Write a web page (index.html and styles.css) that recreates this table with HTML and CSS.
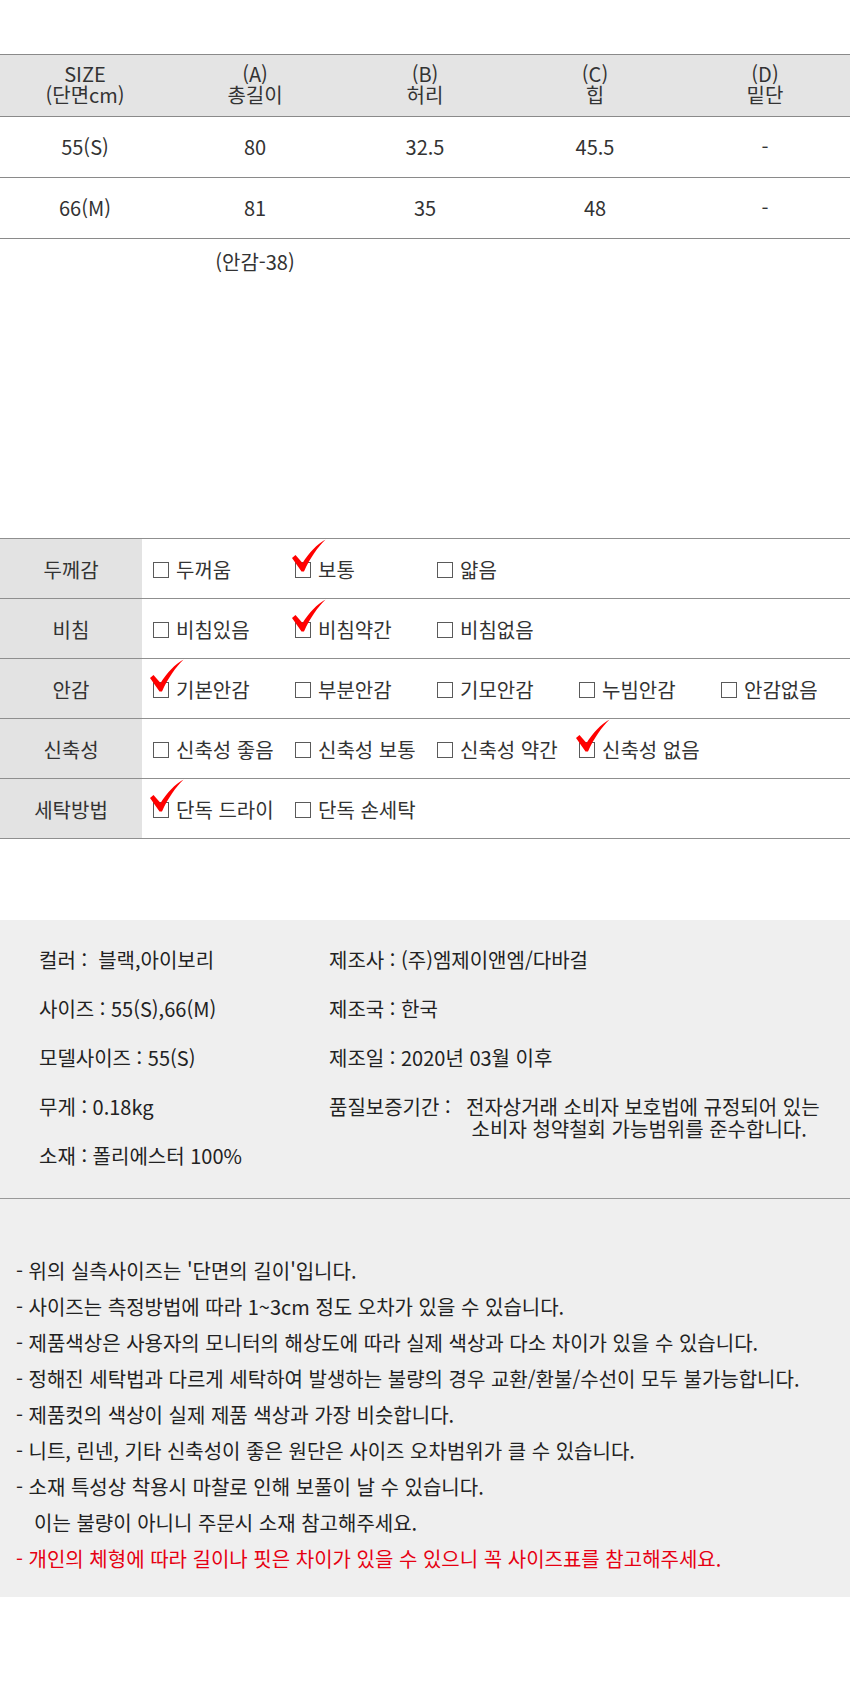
FILE: index.html
```html
<!DOCTYPE html>
<html lang="ko">
<head>
<meta charset="utf-8">
<title>사이즈 정보</title>
<link rel="stylesheet" href="styles.css">
</head>
<body>
<div class="page">
  <div class="size-table">
    <div class="size-row size-head">
      <div class="cell">SIZE<br>(단면cm)</div>
      <div class="cell">(A)<br>총길이</div>
      <div class="cell">(B)<br>허리</div>
      <div class="cell">(C)<br>힙</div>
      <div class="cell">(D)<br>밑단</div>
    </div>
    <div class="size-row">
      <div class="cell">55(S)</div>
      <div class="cell">80</div>
      <div class="cell">32.5</div>
      <div class="cell">45.5</div>
      <div class="cell">-</div>
    </div>
    <div class="size-row">
      <div class="cell">66(M)</div>
      <div class="cell">81</div>
      <div class="cell">35</div>
      <div class="cell">48</div>
      <div class="cell">-</div>
    </div>
    <div class="size-note">
      <div class="cell"></div>
      <div class="cell">(안감-38)</div>
    </div>
  </div>

  <div class="fabric-table">
    <div class="fabric-row">
      <div class="fabric-label">두께감</div>
      <div class="options">
        <div class="opt"><span class="box"></span>두꺼움</div>
        <div class="opt"><span class="box"><svg class="check" viewBox="0 0 36 36"><path d="M1,20 L4.5,17 L11.5,25 C18,15 26,6 34.5,1.5 C27,9 19,20 13,33.5 L10.5,33.5 Z"/></svg></span>보통</div>
        <div class="opt"><span class="box"></span>얇음</div>
      </div>
    </div>
    <div class="fabric-row">
      <div class="fabric-label">비침</div>
      <div class="options">
        <div class="opt"><span class="box"></span>비침있음</div>
        <div class="opt"><span class="box"><svg class="check" viewBox="0 0 36 36"><path d="M1,20 L4.5,17 L11.5,25 C18,15 26,6 34.5,1.5 C27,9 19,20 13,33.5 L10.5,33.5 Z"/></svg></span>비침약간</div>
        <div class="opt"><span class="box"></span>비침없음</div>
      </div>
    </div>
    <div class="fabric-row">
      <div class="fabric-label">안감</div>
      <div class="options">
        <div class="opt"><span class="box"><svg class="check" viewBox="0 0 36 36"><path d="M1,20 L4.5,17 L11.5,25 C18,15 26,6 34.5,1.5 C27,9 19,20 13,33.5 L10.5,33.5 Z"/></svg></span>기본안감</div>
        <div class="opt"><span class="box"></span>부분안감</div>
        <div class="opt"><span class="box"></span>기모안감</div>
        <div class="opt"><span class="box"></span>누빔안감</div>
        <div class="opt"><span class="box"></span>안감없음</div>
      </div>
    </div>
    <div class="fabric-row">
      <div class="fabric-label">신축성</div>
      <div class="options">
        <div class="opt"><span class="box"></span>신축성 좋음</div>
        <div class="opt"><span class="box"></span>신축성 보통</div>
        <div class="opt"><span class="box"></span>신축성 약간</div>
        <div class="opt"><span class="box"><svg class="check" viewBox="0 0 36 36"><path d="M1,20 L4.5,17 L11.5,25 C18,15 26,6 34.5,1.5 C27,9 19,20 13,33.5 L10.5,33.5 Z"/></svg></span>신축성 없음</div>
      </div>
    </div>
    <div class="fabric-row">
      <div class="fabric-label">세탁방법</div>
      <div class="options">
        <div class="opt"><span class="box"><svg class="check" viewBox="0 0 36 36"><path d="M1,20 L4.5,17 L11.5,25 C18,15 26,6 34.5,1.5 C27,9 19,20 13,33.5 L10.5,33.5 Z"/></svg></span>단독 드라이</div>
        <div class="opt"><span class="box"></span>단독 손세탁</div>
      </div>
    </div>
  </div>

  <div class="info">
    <div class="info-grid">
      <div class="info-col">
        <div class="info-item">컬러 :&nbsp; 블랙,아이보리</div>
        <div class="info-item">사이즈 : 55(S),66(M)</div>
        <div class="info-item">모델사이즈 : 55(S)</div>
        <div class="info-item">무게 : 0.18kg</div>
        <div class="info-item">소재 : 폴리에스터 100%</div>
      </div>
      <div class="info-col">
        <div class="info-item">제조사 : (주)엠제이앤엠/다바걸</div>
        <div class="info-item">제조국 : 한국</div>
        <div class="info-item">제조일 : 2020년 03월 이후</div>
        <div class="info-item info-warranty">
          <span class="warranty-label">품질보증기간 :</span>
          <span class="warranty-text">전자상거래 소비자 보호법에 규정되어 있는<br>&nbsp;소비자 청약철회 가능범위를 준수합니다.</span>
        </div>
      </div>
    </div>
  </div>

  <div class="notes">
    <p>- 위의 실측사이즈는 '단면의 길이'입니다.</p>
    <p>- 사이즈는 측정방법에 따라 1~3cm 정도 오차가 있을 수 있습니다.</p>
    <p>- 제품색상은 사용자의 모니터의 해상도에 따라 실제 색상과 다소 차이가 있을 수 있습니다.</p>
    <p>- 정해진 세탁법과 다르게 세탁하여 발생하는 불량의 경우 교환/환불/수선이 모두 불가능합니다.</p>
    <p>- 제품컷의 색상이 실제 제품 색상과 가장 비슷합니다.</p>
    <p>- 니트, 린넨, 기타 신축성이 좋은 원단은 사이즈 오차범위가 클 수 있습니다.</p>
    <p>- 소재 특성상 착용시 마찰로 인해 보풀이 날 수 있습니다.</p>
    <p class="indent">이는 불량이 아니니 주문시 소재 참고해주세요.</p>
    <p class="red">- 개인의 체형에 따라 길이나 핏은 차이가 있을 수 있으니 꼭 사이즈표를 참고해주세요.</p>
  </div>
</div>
</body>
</html>
```

FILE: styles.css
```css
* { box-sizing: border-box; }
html, body { margin: 0; padding: 0; background: #fff; }
body {
  font-family: "Noto Sans CJK KR", "Noto Sans", sans-serif;
  color: #333;
  font-size: 20px;
  letter-spacing: 0;
}
.page { width: 850px; min-height: 1701px; }

/* size table */
.size-table { margin-top: 54px; border-top: 1px solid #8a8a8a; }
.size-row {
  display: grid;
  grid-template-columns: repeat(5, 1fr);
  height: 61px;
  border-bottom: 1px solid #8a8a8a;
  align-items: center;
  text-align: center;
  line-height: 22px;
}
.size-head { height: 62px; background: #e4e4e4; line-height: 21.5px; padding-bottom: 3px; }
.size-note {
  display: grid;
  grid-template-columns: repeat(5, 1fr);
  text-align: center;
  line-height: 22px;
  margin-top: 12px;
}

/* fabric table */
.fabric-table { margin-top: 265px; border-top: 1px solid #8f8f8f; }
.fabric-row {
  display: grid;
  grid-template-columns: 142px 1fr;
  height: 60px;
  border-bottom: 1px solid #8f8f8f;
}
.fabric-label {
  background: #e3e3e3;
  display: flex;
  align-items: center;
  justify-content: center;
  padding-top: 1px;
}
.options { display: flex; align-items: center; padding-left: 11px; padding-top: 2px; }
.opt { width: 142px; flex: none; display: flex; align-items: center; white-space: nowrap; line-height: 22px; }
.box {
  position: relative;
  width: 16px;
  height: 16px;
  border: 1.5px solid #5a5a5a;
  margin-right: 7px;
  flex: none;
}
.check {
  position: absolute;
  left: -5px;
  top: -25px;
  width: 36px;
  height: 36px;
  fill: #f00;
}

/* info */
.info { margin-top: 81px; background: #efefef; border-bottom: 1px solid #999; padding: 29px 0 31px 39px; color: #222; }
.info-grid { display: grid; grid-template-columns: 290px 1fr; }
.info-item { line-height: 22px; margin-bottom: 27px; white-space: nowrap; }
.info-col .info-item:last-child { margin-bottom: 0; }
.info-warranty { display: flex; }
.warranty-label { width: 137px; flex: none; }

/* notes */
.notes { background: #efefef; padding: 54px 0 20px 16px; color: #222; }
.notes p { margin: 0; line-height: 36px; white-space: nowrap; }
.notes .indent { padding-left: 18px; }
.notes .red { color: #e60012; }
```
